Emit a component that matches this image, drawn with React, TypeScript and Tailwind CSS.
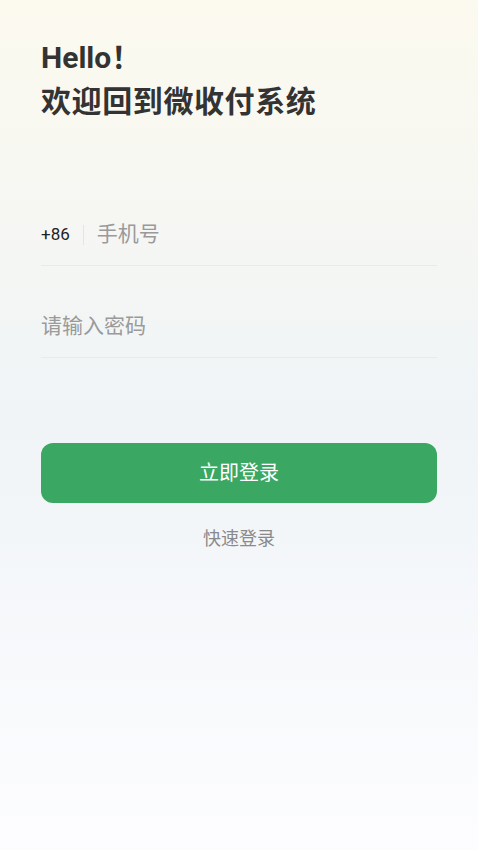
import React, { useState } from "react";

export default function App() {
  const [phone, setPhone] = useState("");
  const [password, setPassword] = useState("");

  return (
    <div
      className="min-h-[850px] w-full bg-linear-to-b from-[#fcfaef] via-[#f0f4f7] to-[#fdfdff] px-[41px] pt-[36px]"
      style={{ fontFamily: 'Roboto, "Noto Sans CJK SC", sans-serif' }}
    >
      {/* Title */}
      <h1 className="text-[30px] font-bold leading-[44px] text-[#333333]">
        <div>Hello！</div>
        <div className="tracking-[0.6px]">欢迎回到微收付系统</div>
      </h1>

      {/* Phone */}
      <div className="mt-[80px] flex h-[62px] items-center border-b border-[#e6eaed]">
        <span className="text-[17px] text-[#222222]">+86</span>
        <span className="mx-[13px] h-[20px] w-px bg-[#e3e6e8]" />
        <input
          value={phone}
          onChange={(e) => setPhone(e.target.value)}
          placeholder="手机号"
          className="flex-1 bg-transparent text-[21px] text-[#333] outline-none placeholder:text-[#9a9a9a]"
        />
      </div>

      {/* Password */}
      <div className="mt-[30px] flex h-[62px] items-center border-b border-[#e6eaed]">
        <input
          type="password"
          value={password}
          onChange={(e) => setPassword(e.target.value)}
          placeholder="请输入密码"
          className="flex-1 bg-transparent text-[21px] text-[#333] outline-none placeholder:text-[#9a9a9a]"
        />
      </div>

      <button className="mt-[85px] flex h-[60px] w-full items-center justify-center rounded-[12px] bg-[#3aa762] text-[20px] text-white">
        立即登录
      </button>

      <div className="mt-[22px] text-center text-[18px] text-[#8a8a8a]">快速登录</div>
    </div>
  );
}
